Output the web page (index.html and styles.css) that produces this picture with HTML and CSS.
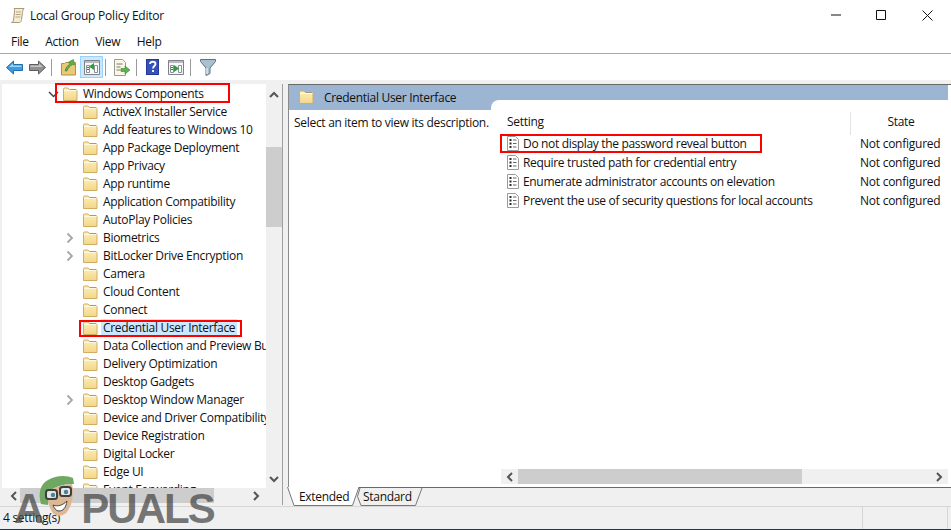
FILE: index.html
```html
<!DOCTYPE html>
<html lang="en">
<head>
<meta charset="utf-8">
<title>Local Group Policy Editor</title>
<link rel="stylesheet" href="styles.css">
</head>
<body>
<svg class="defs" width="0" height="0">
  <defs>
    <linearGradient id="fg" x1="0" y1="0" x2="0" y2="1"><stop offset="0" stop-color="#fdf0b8"/><stop offset="1" stop-color="#f3d58a"/></linearGradient>
    <symbol id="folder" viewBox="0 0 16 14">
      <path d="M1.5 13.5V2.2c0-.8.4-1.2 1-1.2h3.6l1.4 1.6h6.500c.6 0 1 .4 1 1v9.900z" fill="url(#fg)" stroke="#cfae62"/>
      <path d="M2 3.500h12.500" stroke="#fff8dc"/>
      <path d="M8 2.500h6" stroke="#9a9a9a"/>
    </symbol>
    <symbol id="doc" viewBox="0 0 14 15">
      <path d="M1.500.5h8l3 3v11h-11z" fill="#fff" stroke="#9a9a9a"/>
      <path d="M3.500 3h2v2h-2zM3.500 6.500h2v2h-2zM3.500 10h2v2h-2z" fill="#2b2b2b"/>
      <path d="M7 4h3.500M7 7.500h3.500M7 11h3.500" stroke="#666"/>
    </symbol>
    <symbol id="chev" viewBox="0 0 8 12">
      <path d="M1.500 1.500l4.500 4.500-4.500 4.500" fill="none" stroke="#a6a6a6" stroke-width="1.800"/>
    </symbol>
    <symbol id="pane" viewBox="0 0 16 15">
      <path d="M.5.5h15v14H.5z" fill="#f6f7f8" stroke="#7d8288"/>
      <path d="M1 1h14v2H1z" fill="#b9bdc2"/>
      <path d="M2.500 5.500h3v7h-3zM10.500 5.500h3v7h-3z" fill="#fff" stroke="#8b9097"/>
      <path d="M3 7.500h2M3 9.500h2" stroke="#666"/>
    </symbol>
  </defs>
</svg>
<div class="window">
  <header class="titlebar">
    <svg class="app-icon" width="16" height="17" viewBox="0 0 16 17"><path d="M4 1.500h10c-1 1-1.200 2-1.500 4l-1 7c-.3 2-1 3-2 3H1.500c1 0 1.700-.8 2-2.500l1-8C4.700 2.700 4.500 2 4 1.500z" fill="#f5ecd2" stroke="#a89a78"/><path d="M6 5h5M5.700 7.500h5M5.400 10h5" stroke="#b7a987"/></svg>
    <span class="title">Local Group Policy Editor</span>
    <span class="grow"></span>
    <svg class="wc-min" width="10" height="2" viewBox="0 0 10 2"><path d="M0 1h10" stroke="#111"/></svg>
    <svg class="wc-max" width="10" height="10" viewBox="0 0 10 10"><path d="M.5.5h9v9h-9z" fill="none" stroke="#111"/></svg>
    <svg class="wc-close" width="11" height="11" viewBox="0 0 11 11"><path d="M.5.5l10 10M10.500.5l-10 10" stroke="#111"/></svg>
  </header>
  <nav class="menubar"><span>File</span><span>Action</span><span>View</span><span>Help</span></nav>
  <div class="toolbar">
    <svg class="t-back" width="17" height="15" viewBox="0 0 17 15"><path d="M.5 7.500L7.500 1v3.500h9v6h-9V14z" fill="#3d9be0" stroke="#1f6fb0"/><path d="M3 7l4-3.500V5.500h8.500V7z" fill="#9ad4f7"/></svg>
    <svg class="t-fwd" width="17" height="15" viewBox="0 0 17 15"><path d="M16.500 7.500L9.500 1v3.500h-9v6h9V14z" fill="#909090" stroke="#5e5e5e"/><path d="M1.500 5.500h8.500V3.500L14 7H1.500z" fill="#c5c5c5"/></svg>
    <i class="sep"></i>
    <svg class="t-up" width="15" height="18" viewBox="0 0 15 18"><path d="M.5 17V5.500h3l1-1h10V17z" fill="#edc977" stroke="#b58f3e"/><path d="M4 13c1-4 3-6 5-7L7.500 4 12.500 1.500 13.500 7 11.500 6.500C9 8 7 10 6 13z" fill="#5bb04a" stroke="#3b8030" stroke-width=".6"/></svg>
    <span class="t-active"><svg width="16" height="15"><use href="#pane"/></svg><svg class="mark" width="5" height="7" viewBox="0 0 5 7"><path d="M5 0v7L0 3.500z" fill="#2f9c3b"/></svg></span>
    <i class="sep"></i>
    <svg class="t-export" width="16" height="17" viewBox="0 0 16 17"><path d="M.5.500h8l3 3V16.500H.5z" fill="#fbf7e6" stroke="#9b9b8c"/><path d="M2.500 5h6M2.500 8h4M2.500 11h4" stroke="#777"/><path d="M7 9.500h4V7l5 4-5 4v-2.500H7z" fill="#58b44b" stroke="#3c8a32" stroke-width=".6"/></svg>
    <i class="sep"></i>
    <svg class="t-help" width="13" height="16" viewBox="0 0 13 16"><path d="M0 0h13v16H0z" fill="#24399a"/><path d="M1 1h11v14H1z" fill="#3552b8"/><path d="M4 5c0-3 5.500-3 5.500 0 0 2-2.500 2-2.500 4.500M7 11v2" fill="none" stroke="#fff" stroke-width="1.800"/></svg>
    <span class="t-pane2"><svg width="16" height="15"><use href="#pane"/></svg><svg class="mark" width="5" height="7" viewBox="0 0 5 7"><path d="M0 0v7l5-3.500z" fill="#2f9c3b"/></svg></span>
    <i class="sep"></i>
    <svg class="t-filter" width="16" height="17" viewBox="0 0 16 17"><path d="M.5.500h15v2L10 9v5.500l-4 2V9L.5 2.500z" fill="#a9c0cf" stroke="#5e7382"/><path d="M7 9v6" stroke="#dfe9ef" stroke-width="1.500"/></svg>
  </div>
  <main class="workspace">
    <section class="tree-pane">
      <div class="tree-body">
        <ul class="tree">
          <li class="root"><svg class="exp-open" width="11" height="7" viewBox="0 0 11 7"><path d="M1 1l4.500 4.500L10 1" fill="none" stroke="#444" stroke-width="1.500"/></svg><svg class="f" width="16" height="14"><use href="#folder"/></svg><span>Windows Components</span></li>
          <li><svg class="f" width="16" height="14"><use href="#folder"/></svg><span>ActiveX Installer Service</span></li>
          <li><svg class="f" width="16" height="14"><use href="#folder"/></svg><span>Add features to Windows 10</span></li>
          <li><svg class="f" width="16" height="14"><use href="#folder"/></svg><span>App Package Deployment</span></li>
          <li><svg class="f" width="16" height="14"><use href="#folder"/></svg><span>App Privacy</span></li>
          <li><svg class="f" width="16" height="14"><use href="#folder"/></svg><span>App runtime</span></li>
          <li><svg class="f" width="16" height="14"><use href="#folder"/></svg><span>Application Compatibility</span></li>
          <li><svg class="f" width="16" height="14"><use href="#folder"/></svg><span>AutoPlay Policies</span></li>
          <li><svg class="exp" width="8" height="12"><use href="#chev"/></svg><svg class="f" width="16" height="14"><use href="#folder"/></svg><span>Biometrics</span></li>
          <li><svg class="exp" width="8" height="12"><use href="#chev"/></svg><svg class="f" width="16" height="14"><use href="#folder"/></svg><span>BitLocker Drive Encryption</span></li>
          <li><svg class="f" width="16" height="14"><use href="#folder"/></svg><span>Camera</span></li>
          <li><svg class="f" width="16" height="14"><use href="#folder"/></svg><span>Cloud Content</span></li>
          <li><svg class="f" width="16" height="14"><use href="#folder"/></svg><span>Connect</span></li>
          <li class="selected"><svg class="f" width="16" height="14"><use href="#folder"/></svg><span>Credential User Interface</span></li>
          <li><svg class="f" width="16" height="14"><use href="#folder"/></svg><span>Data Collection and Preview Builds</span></li>
          <li><svg class="f" width="16" height="14"><use href="#folder"/></svg><span>Delivery Optimization</span></li>
          <li><svg class="f" width="16" height="14"><use href="#folder"/></svg><span>Desktop Gadgets</span></li>
          <li><svg class="exp" width="8" height="12"><use href="#chev"/></svg><svg class="f" width="16" height="14"><use href="#folder"/></svg><span>Desktop Window Manager</span></li>
          <li><svg class="f" width="16" height="14"><use href="#folder"/></svg><span>Device and Driver Compatibility</span></li>
          <li><svg class="f" width="16" height="14"><use href="#folder"/></svg><span>Device Registration</span></li>
          <li><svg class="f" width="16" height="14"><use href="#folder"/></svg><span>Digital Locker</span></li>
          <li><svg class="f" width="16" height="14"><use href="#folder"/></svg><span>Edge UI</span></li>
          <li><svg class="f" width="16" height="14"><use href="#folder"/></svg><span>Event Forwarding</span></li>
        </ul>
        <div class="vscroll">
          <svg width="10" height="7" viewBox="0 0 10 7"><path d="M1 6l4-4 4 4" fill="none" stroke="#555" stroke-width="2"/></svg>
          <div class="vtrack"><div class="vthumb"></div></div>
          <svg width="10" height="7" viewBox="0 0 10 7"><path d="M1 1l4 4 4-4" fill="none" stroke="#555" stroke-width="2"/></svg>
        </div>
      </div>
      <div class="tree-h">
        <svg width="7" height="10" viewBox="0 0 7 10"><path d="M6 1L2 5l4 4" fill="none" stroke="#555" stroke-width="2"/></svg>
        <div class="tree-thumb"></div>
        <svg width="7" height="10" viewBox="0 0 7 10"><path d="M1 1l4 4-4 4" fill="none" stroke="#555" stroke-width="2"/></svg>
      </div>
    </section>
    <section class="detail-pane">
      <div class="detail-frame">
        <div class="crumb"><svg width="16" height="14"><use href="#folder"/></svg><span>Credential User Interface</span></div>
        <div class="detail-body">
          <p class="desc">Select an item to view its description.</p>
          <div class="list">
            <div class="list-head"><span class="col-setting">Setting</span><span class="col-state">State</span></div>
            <div class="row"><svg width="14" height="15"><use href="#doc"/></svg><span class="name">Do not display the password reveal button</span><span class="state">Not configured</span></div>
            <div class="row"><svg width="14" height="15"><use href="#doc"/></svg><span class="name">Require trusted path for credential entry</span><span class="state">Not configured</span></div>
            <div class="row"><svg width="14" height="15"><use href="#doc"/></svg><span class="name">Enumerate administrator accounts on elevation</span><span class="state">Not configured</span></div>
            <div class="row"><svg width="14" height="15"><use href="#doc"/></svg><span class="name">Prevent the use of security questions for local accounts</span><span class="state">Not configured</span></div>
            <div class="grow"></div>
            <div class="list-h">
              <span class="btn"><svg width="7" height="10" viewBox="0 0 7 10"><path d="M6 1L2 5l4 4" fill="none" stroke="#555" stroke-width="2"/></svg></span>
              <div class="hthumb"></div>
              <span class="grow"></span>
              <span class="btn"><svg width="7" height="10" viewBox="0 0 7 10"><path d="M1 1l4 4-4 4" fill="none" stroke="#555" stroke-width="2"/></svg></span>
            </div>
          </div>
        </div>
      </div>
      <div class="tabs">
        <span class="tab tab-ext"><svg class="tab-shape" width="73" height="19" viewBox="0 0 73 19"><path d="M.5 0l6.500 18.500h58.500L72 0z" fill="#fff"/><path d="M.5 0l6.500 18.500h58.500L72 0" fill="none" stroke="#777"/></svg><span class="tab-label">Extended</span></span>
        <span class="tab tab-std"><svg class="tab-shape" width="66" height="18" viewBox="0 0 66 18"><path d="M3 0L.5 8.500 4 17.500h54.500L65 0" fill="#f0f0f0" stroke="#777"/></svg><span class="tab-label">Standard</span></span>
      </div>
    </section>
  </main>
  <footer class="statusbar"><span class="st-a">4 setting(s)</span><span class="st-b"></span><span class="st-c"></span></footer>
</div>
<i class="box box-root"></i>
<i class="box box-tree"></i>
<i class="box box-row"></i>
<div class="watermark" aria-label="Appuals">
  <span class="wm-a">A</span>
  <span class="wm-rest">PUALS</span>
  <svg class="wm-head" width="37" height="42" viewBox="0 0 37 42">
    <path d="M3 29C0 19 2 9 10 5 18 0 29 0 35 3l1 6c-11 0-21 3-25 9l-1 12z" fill="#6fa862"/>
    <path d="M10 17c5-5 16-8 24-8 2 8 1 20-5 28-4 5-12 5-15 0-3-5-5-12-4-20z" fill="#dcb895"/>
    <rect x="8" y="15" width="11" height="9" rx="2.500" fill="#dfe7ea" stroke="#3f3f3f" stroke-width="2"/>
    <rect x="22" y="12" width="11" height="9" rx="2.500" fill="#dfe7ea" stroke="#3f3f3f" stroke-width="2"/>
    <circle cx="15" cy="20" r="2.200" fill="#4f7f96"/><circle cx="28" cy="17" r="2.200" fill="#4f7f96"/>
    <path d="M15 30c5 2 10 0 14-4-1 7-4 10-8 10-3 0-5-3-6-6z" fill="#fff" stroke="#444"/>
  </svg>
</div>
</body>
</html>
```
FILE: styles.css
```css
* { box-sizing: border-box; }
html, body { margin: 0; height: 100%; }
body {
  width: 951px;
  height: 530px;
  overflow: hidden;
  position: relative;
  background: #f0f0f0;
  font-family: "Open Sans", "Noto Sans", sans-serif;
  font-size: 12px;
  letter-spacing: -0.3px;
  color: #111;
}
.defs { position: absolute; }
.window {
  width: 951px;
  height: 530px;
  display: flex;
  flex-direction: column;
  border-bottom: 1px solid #2a3448;
}
.grow { flex: 1; }

.titlebar {
  height: 30px;
  flex: none;
  background: #fff;
  display: flex;
  align-items: center;
  padding-left: 10px;
}
.title { margin-left: 4px; letter-spacing: -0.22px; }
.wc-min { margin-right: 35px; }
.wc-max { margin-right: 36px; }
.wc-close { margin-right: 18px; }

.menubar {
  height: 24px;
  flex: none;
  background: #fff;
  display: flex;
  align-items: center;
  padding: 0 0 1px 11px;
  gap: 16.5px;
  border-bottom: 1px solid #a8a8b4;
  letter-spacing: -0.3px;
}

.toolbar {
  height: 26px;
  flex: none;
  background: #fff;
  display: flex;
  align-items: center;
  padding-left: 6px;
}
.sep { width: 1px; height: 17px; background: #9a9a9a; flex: none; }
.t-back { margin-right: 6px; }
.t-fwd { margin-right: 5px; }
.t-up { margin-left: 9px; }
.t-active {
  position: relative;
  width: 23px;
  height: 22px;
  margin: 0 2px 0 4px;
  background: #cce8ff;
  border: 1px solid #99d1ff;
  display: flex;
  align-items: center;
  justify-content: center;
}
.t-export { margin: 0 6px 0 8px; }
.t-help { margin-left: 9px; }
.t-pane2 { position: relative; display: flex; margin: 0 6px 0 9px; }
.t-filter { margin-left: 9px; }
.mark { position: absolute; left: 6px; top: 5px; }
.t-active .mark { left: 8px; top: 6px; }

.workspace {
  height: 426px;
  flex: none;
  display: flex;
  padding: 4px 0 0 2px;
  background: #f0f0f0;
}
.tree-pane {
  width: 281px;
  height: 421px;
  flex: none;
  display: flex;
  flex-direction: column;
  border-right: 1px solid #a0a0a0;
  background: #fff;
}
.tree-body { height: 404px; flex: none; display: flex; }
.tree {
  list-style: none;
  margin: 0;
  padding: 1px 0 0;
  width: 264px;
  overflow: hidden;
  flex: none;
  background: #fff;
}
.tree li {
  height: 18px;
  display: flex;
  align-items: center;
  padding-left: 80px;
  position: relative;
  white-space: nowrap;
}
.tree li span { margin-top: -1px; }
.tree li .f { flex: none; margin-right: 5px; }
.tree li.root { padding-left: 60px; }
.tree .exp { position: absolute; left: 64px; top: 3px; }
.tree .exp-open { position: absolute; left: 46px; top: 6px; }
.tree .selected span { background: #cce8ff; padding: 0 2px; margin-left: -2px; }
.vscroll {
  width: 16px;
  background: #f0f0f0;
  display: flex;
  flex-direction: column;
  align-items: center;
  padding: 7px 0 5px;
}
.vtrack { flex: 1; width: 100%; padding-top: 49px; }
.vthumb { height: 80px; background: #cdcdcd; }
.tree-h {
  flex: 1;
  background: #f0f0f0;
  display: flex;
  align-items: flex-start;
  padding-left: 8px;
}
.tree-h svg { margin-top: 3px; flex: none; }
.tree-thumb { width: 194px; height: 15px; margin: 0 39px 0 3px; background: #cdcdcd; }

.detail-pane {
  margin-left: 5px;
  width: 663px;
  height: 422px;
  flex: none;
  display: flex;
  flex-direction: column;
}
.detail-frame {
  height: 404px;
  flex: none;
  display: flex;
  flex-direction: column;
  background: #fff;
  border-top: 1px solid #696969;
  border-left: 1px solid #8a8a8a;
  border-bottom: 1px solid #696969;
}
.crumb {
  height: 25px;
  flex: none;
  background: #9bb5d2;
  display: flex;
  align-items: center;
  padding: 0 0 1px 9px;
  margin-right: 3px;
  gap: 10px;
}
.detail-body { flex: 1; display: flex; min-height: 0; padding-right: 3px; }
.desc {
  margin: 4px 0 0 5px;
  width: 197px;
  flex: none;
  white-space: nowrap;
}
.list {
  flex: 1;
  margin-top: -10px;
  background: #fff;
  border-radius: 8px 0 0 0;
  display: flex;
  flex-direction: column;
  padding-top: 12px;
  min-width: 0;
}
.list-head {
  height: 23px;
  display: flex;
  align-items: center;
  padding-left: 16px;
  margin-bottom: -1px;
  flex: none;
}
.col-setting { width: 343px; flex: none; height: 23px; line-height: 20px; }
.col-state {
  flex: 1;
  height: 23px;
  line-height: 20px;
  padding-left: 3px;
  border-left: 1px solid #e3e3e3;
  text-align: center;
}
.row {
  height: 19px;
  flex: none;
  display: flex;
  align-items: center;
  padding-left: 15px;
  white-space: nowrap;
}
.row svg { margin-right: 3px; flex: none; }
.name { width: 337px; flex: none; letter-spacing: -0.33px; }
.state { letter-spacing: -0.25px; }
.list-h {
  flex: none;
  height: 15px;
  margin: 0 0 3px 10px;
  display: flex;
  background: #f0f0f0;
}
.btn { width: 17px; display: flex; align-items: center; justify-content: center; flex: none; }
.hthumb { width: 284px; background: #cdcdcd; flex: none; }

.tabs { flex: 1; display: flex; padding-left: 0; margin-left: -1px; }
.tab { position: relative; display: block; height: 18px; line-height: 17px; }
.tab-shape { position: absolute; left: 0; top: 0; }
.tab-label { position: relative; }
.tab-ext { width: 72px; margin-top: -1px; height: 19px; line-height: 19px; padding-left: 12px; }
.tab-std { width: 66px; margin-left: -2px; padding-left: 6px; }

.statusbar {
  flex: 1;
  min-height: 0;
  background: #f0f0f0;
  display: flex;
  align-items: center;
  border-top: 1px solid #d6d6d6;
}
.st-a { width: 863px; padding-left: 3px; height: 100%; line-height: 21px; border-right: 1px solid #d6d6d6; }
.st-b { width: 85px; height: 100%; border-right: 1px solid #d6d6d6; }

.box { position: absolute; border: 2px solid #f00; pointer-events: none; }
.box-root { left: 55px; top: 83px; width: 175px; height: 20px; }
.box-tree { left: 79px; top: 320px; width: 163px; height: 17px; }
.box-row { left: 500px; top: 134px; width: 262px; height: 19px; }

.watermark {
  position: absolute;
  left: 14px;
  top: 488px;
  height: 42px;
  width: 205px;
  display: flex;
  align-items: center;
  font-family: "Liberation Sans", sans-serif;
  font-weight: 700;
  font-size: 42px;
  letter-spacing: -2px;
  color: rgba(70, 70, 70, 0.72);
  pointer-events: none;
}
.wm-rest { margin-left: 39px; }
.wm-head { position: absolute; left: 24px; top: -13px; }
```
